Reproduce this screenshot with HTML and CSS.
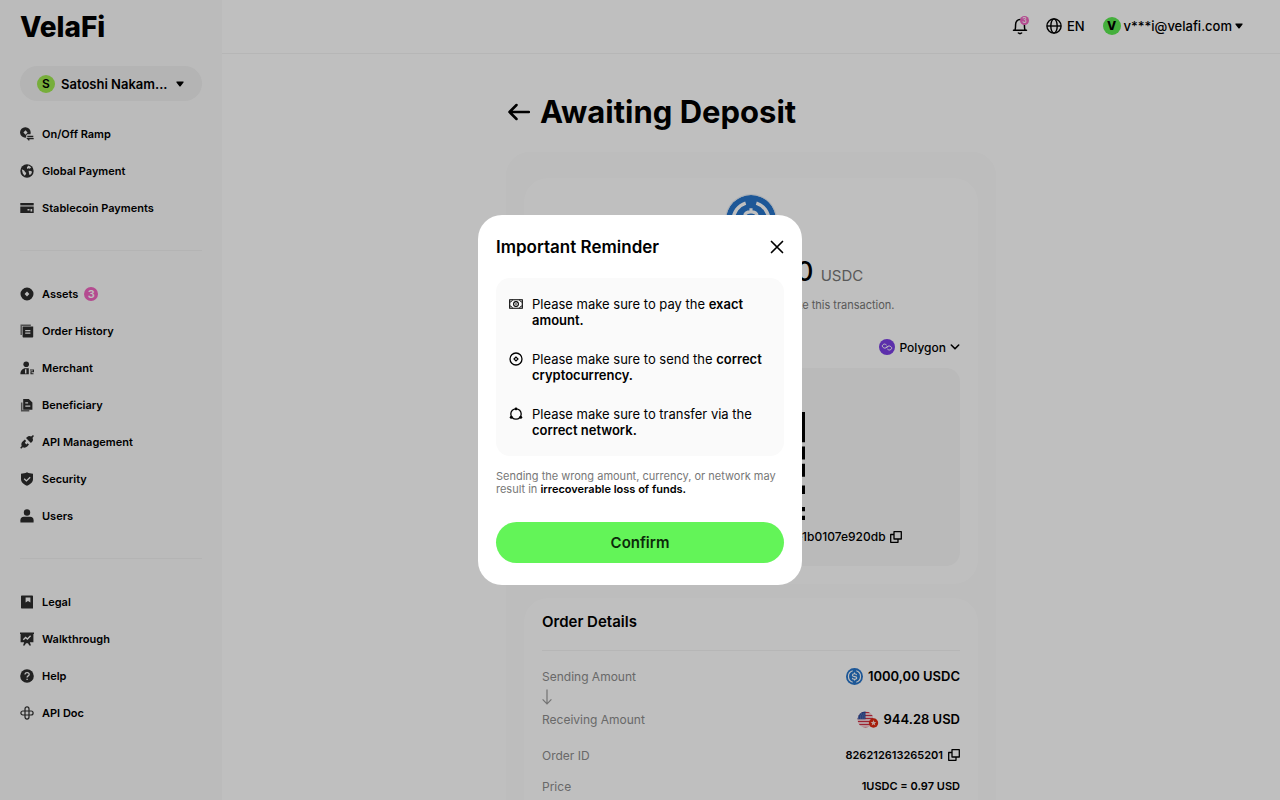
FILE: index.html
```html
<!DOCTYPE html>
<html lang="en">
  <head>
    <meta charset="UTF-8" />
    <meta name="viewport" content="width=device-width, initial-scale=1.0" />
    <title>VelaFi - Awaiting Deposit</title>
    <link rel="stylesheet" href="styles.css">
  </head>
  <body>
    <svg class="sprite" aria-hidden="true">
      <symbol id="usdc" viewBox="0 0 32 32">
        <circle cx="16" cy="16" r="16" fill="#2775ca" />
        <path d="M12.6 5.200a11.300 11.300 0 0 0 0 21.600M19.400 5.200a11.300 11.300 0 0 1 0 21.600" fill="none" stroke="#fff" stroke-width="2.200" />
        <path d="M20 13.400c-.3-1.700-1.800-2.600-4-2.600-2.400 0-4 1-4 2.700 0 4 8.200 1.500 8.200 5 0 1.700-1.700 2.800-4.200 2.800-2.400 0-4-1.100-4.200-2.800M16 8.400v2.600M16 21v2.600" fill="none" stroke="#fff" stroke-width="2" />
      </symbol>
      <symbol id="copy" viewBox="0 0 12 12">
        <path d="M4 .7h7.300V8H4zM4 3.500H.7v7.800H8V8" fill="none" stroke="currentColor" stroke-width="1.300" stroke-linejoin="round" />
      </symbol>
      <symbol id="caret" viewBox="0 0 8 6">
        <path d="M1 .5h6c.6 0 .8.5.5.9L4.600 5.200c-.3.4-.9.4-1.200 0L.5 1.400C.2 1 .4.5 1 .5z" fill="currentColor" />
      </symbol>
    </svg>

    <div class="app">
      <aside class="sidebar">
        <a class="logo" href="#">VelaFi</a>
        <button class="account" type="button" aria-haspopup="true">
          <span class="avatar avatar-lime">S</span>
          <span class="account-name">Satoshi Nakam...</span>
          <svg class="caret"><use href="#caret" /></svg>
        </button>
        <nav>
          <ul class="menu">
            <li><a href="#">
              <svg viewBox="0 0 14 14"><path fill-rule="evenodd" d="M5.500.3a5.200 5.200 0 0 1 5.200 5.200c0 .7-.1 1.300-.3 1.800H8c-1.200 0-1.800.6-1.800 1.700v1.600A5.200 5.200 0 1 1 5.500.3zm0 2.900L3.400 5.500l2.100 2.300 2.100-2.300z" /><path d="M7.300 9.500h6M13.700 11.700H7.700l1.600 1.700" fill="none" stroke="currentColor" stroke-width="1.300" /></svg>
              On/Off Ramp</a></li>
            <li><a href="#">
              <svg viewBox="0 0 14 14"><circle cx="7" cy="7" r="6.700" /><path class="cut" d="M8.500 1.600l2.700 1.600-1.400 1.600-1.300-.6-1.300.8-.3-1.700zM1.800 5.200l2.400 1.300.9 1.600 1.200.8-.6 1.600-1 1.300L2.800 9.600zM8.600 6.700l2.600.4.8.9-.9 2.300-1.700.7-.4-1.800z" /></svg>
              Global Payment</a></li>
            <li><a href="#">
              <svg viewBox="0 0 14 14"><path d="M.3 2h13.400v2.400H.3z" /><path fill-rule="evenodd" d="M.3 5.500h13.400V12H.3zm7.200 2.600v1.500h2V8.100zm3 0v2.300h1.700V8.100z" /></svg>
              Stablecoin Payments</a></li>
          </ul>
          <hr class="line">
          <ul class="menu">
            <li><a href="#">
              <svg viewBox="0 0 14 14"><path fill-rule="evenodd" d="M7 .5a6.500 6.500 0 1 1 0 13 6.500 6.500 0 0 1 0-13zm0 4L4.600 7 7 9.500 9.400 7z" /></svg>
              Assets <span class="badge">3</span></a></li>
            <li><a href="#">
              <svg viewBox="0 0 14 14"><path d="M1.200 11V1.200h9.600" fill="none" stroke="currentColor" stroke-width="1.400" opacity=".7" /><path fill-rule="evenodd" d="M2.600 2.500h10.600v10c0 .6-.4 1-1 1H3.600c-.6 0-1-.4-1-1zM5.200 6v1.200h5.200V6zm0 2.600v1.200h5.200V8.600z" /></svg>
              Order History</a></li>
            <li><a href="#">
              <svg viewBox="0 0 14 14"><circle cx="6.200" cy="3.300" r="2.800" /><path fill-rule="evenodd" d="M.4 13.300c0-3.600 2-6 5.200-6h3.200v6zM5 8.200v4.200h1.400V8.200z" /><path d="M10 9h3.500v1.800H11v2h2.500" fill="none" stroke="currentColor" stroke-width="1.100" /></svg>
              Merchant</a></li>
            <li><a href="#">
              <svg viewBox="0 0 14 14"><path d="M1.700 4.500v8.300h7.600" fill="none" stroke="currentColor" stroke-width="1.500" opacity=".7" /><path fill-rule="evenodd" d="M3.200 1h5.600l3.600 3.500v7.300H3.200zM5.300 4.300v1.200h2.800V4.300zm0 3.300v1.200h5V7.600z" /></svg>
              Beneficiary</a></li>
            <li><a href="#">
              <svg viewBox="0 0 14 14"><path d="M13.900.9L13 0l-1.800 1.500C9.800.6 8.200.9 7.200 1.900L6 3.100 10.900 8l1.200-1.200c1-1 1.200-2.600.4-3.900zM4.900 4.600l-2 1.600C1.300 7.600 1 9.300 1.700 11L.2 12.700l1 1L2.800 12.300c1.500.8 3.200.5 4.400-.7L9 9.500 7.600 8.200 6.400 9.400 4.800 7.800l1.300-1.900z" /></svg>
              API Management</a></li>
            <li><a href="#">
              <svg viewBox="0 0 14 14"><path d="M7 .3c2 1 3.800 1.400 6 1.500V7c0 3.200-2.500 5.400-6 6.700C3.500 12.400 1 10.200 1 7V1.800C3.200 1.700 5 1.300 7 .3z" /><path class="cut-line" d="M4.200 6.800l2.200 2.100 3.800-3.600" /></svg>
              Security</a></li>
            <li><a href="#">
              <svg viewBox="0 0 14 14"><circle cx="7" cy="3.500" r="3.200" /><path d="M.4 13.500v-2.300c0-2 1.300-3.400 3.400-3.400h6.400c2.100 0 3.400 1.400 3.400 3.400v2.300z" /></svg>
              Users</a></li>
          </ul>
          <hr class="line">
          <ul class="menu">
            <li><a href="#">
              <svg viewBox="0 0 14 14"><path fill-rule="evenodd" d="M1 1.500c0-.6.4-1 1-1h10c.6 0 1 .4 1 1v12H2c-.6 0-1-.4-1-1zm4.600.9v5.200l2.400-1.700 2.400 1.700V2.400z" /></svg>
              Legal</a></li>
            <li><a href="#">
              <svg viewBox="0 0 14 14"><path d="M0 .4h14V2h-.6v8.300H9.800l1.200 3.200H9.300L8 11.200H6l-1.300 2.300H3l1.200-3.200H.6V2H0z" /><path class="cut-line" d="M3.300 7.800l2.300-2.300 1.800 1.500 3.200-3.200" /></svg>
              Walkthrough</a></li>
            <li><a href="#">
              <svg viewBox="0 0 14 14"><circle cx="7" cy="7" r="6.800" /><path class="cut-line" d="M5 5.600c0-2.900 4.200-2.500 4.200-.2 0 1.500-2.100 1.500-2.100 3M7.100 9.700v1.300" /></svg>
              Help</a></li>
            <li><a href="#">
              <svg viewBox="0 0 14 14"><path d="M5 5V2.900a2 2 0 0 1 4 0V5M9 5h2.100a2 2 0 0 1 0 4H9M9 9v2.100a2 2 0 0 1-4 0V9M5 9H2.900a2 2 0 0 1 0-4H5M5 5h4v4H5z" fill="none" stroke="currentColor" stroke-width="1.200" /></svg>
              API Doc</a></li>
          </ul>
        </nav>
      </aside>

      <div class="content">
        <header class="topbar">
          <button class="top-btn bell" type="button" aria-label="Notifications">
            <svg viewBox="0 0 16 18"><path d="M1.500 13.300h13M3 13c.4-1 .6-2 .6-5.600C3.600 4.600 5.400 2.600 8 2.600s4.400 2 4.400 4.800c0 3.600.2 4.600.6 5.600M6.400 16c1 .8 2.200.8 3.200 0" fill="none" stroke="currentColor" stroke-width="1.500" stroke-linecap="round" /></svg>
            <span class="bell-count">3</span>
          </button>
          <button class="top-btn" type="button">
            <svg class="globe" viewBox="0 0 16 16"><g fill="none" stroke="currentColor" stroke-width="1.400"><circle cx="8" cy="8" r="7.100" /><ellipse cx="8" cy="8" rx="3.200" ry="7.100" /><path d="M1 8h14" /></g></svg>
            EN
          </button>
          <button class="top-btn user" type="button" aria-haspopup="true">
            <span class="avatar avatar-green">V</span>
            v***i@velafi.com
            <svg class="caret"><use href="#caret" /></svg>
          </button>
        </header>

        <main class="page">
          <div class="page-title">
            <a class="back" href="#" aria-label="Back">
              <svg viewBox="0 0 22 18"><path d="M21 9H1.500M8.500 2l-7 7 7 7" fill="none" stroke="currentColor" stroke-width="2.500" stroke-linecap="round" stroke-linejoin="round" /></svg>
            </a>
            <h1>Awaiting Deposit</h1>
          </div>

          <div class="panel">
            <section class="card deposit">
              <svg class="coin-lg"><use href="#usdc" /></svg>
              <p class="amount">1000,000000 <span>USDC</span></p>
              <p class="hint">Please send exact amount to complete this transaction.</p>
              <div class="network">
                <label for="network">Network</label>
                <span class="network-pick">
                  <svg class="polygon" viewBox="0 0 16 16"><circle cx="8" cy="8" r="8" fill="#7b3fe4" /><path d="M9.300 7.200L6.600 8.900a1.700 1.700 0 0 1-1.700 0l-.8-.5a1.600 1.600 0 0 1-.8-1.400c0-.6.300-1.100.8-1.400l.6-.3a1.700 1.700 0 0 1 1.700 0l1.200.8M6.700 8.800l2.700-1.600a1.700 1.700 0 0 1 1.700 0l.8.5c.5.3.8.8.8 1.400s-.3 1.100-.8 1.400l-.7.3a1.700 1.700 0 0 1-1.700 0l-1.100-.7" fill="none" stroke="#fff" /></svg>
                  <select id="network">
                    <option>Polygon</option>
                    <option>Ethereum</option>
                    <option>Tron</option>
                  </select>
                  <svg class="chevron" viewBox="0 0 10 10"><path d="M1.300 3L5 6.800 8.700 3" fill="none" stroke="currentColor" stroke-width="1.600" stroke-linecap="round" stroke-linejoin="round" /></svg>
                </span>
              </div>
              <div class="address-box">
                <svg class="qr" viewBox="0 0 25 25">
                  <path d="M0 .5h7M18 .5h7M0 6.500h7M18 6.500h7M.5 0v7M6.500 0v7M18.500 0v7M24.500 0v7M2 2.500h3M2 3.500h3M2 4.500h3M20 2.500h3M20 3.500h3M20 4.500h3M0 18.500h7M0 24.500h7M.5 18v7M6.500 18v7M2 20.500h3M2 21.500h3M2 22.500h3" />
                  <path d="M9 .5h2M13 1.500h3M10 2.500h4M8 3.500h1M12 4.500h4M9 5.500h2M8 6.500h1M10 6.500h1M12 6.500h1M14 6.500h1M16 6.500h1M1 8.500h3M6 8.500h5M13 8.500h2M18 8.500h3M0 10.500h2M5 10.500h3M11 10.500h6M20 10.500h2M2 12.500h5M9 12.500h3M15 12.500h4M0 14.500h4M7 14.500h2M12 14.500h5M19 14.500h3M3 16.500h2M8 16.500h8M18 16.500h3M9 18.500h2M13 18.500h6M8 20.500h3M15 20.500h6M10 22.500h4M16 22.500h3M21 22.500h1M9 24.500h5M17 24.500h4M24.500 8v3M24.500 12v3M24.500 17v2M24.500 22v1M24.500 24v1" />
                </svg>
                <p class="address">0x7a3f9c52d8e64b1f03ac95e7d2e1b0107e920db
                  <button class="icon-btn" type="button" aria-label="Copy address"><svg class="copy"><use href="#copy" /></svg></button>
                </p>
              </div>
            </section>

            <section class="card details">
              <h2>Order Details</h2>
              <dl>
                <div class="row">
                  <dt>Sending Amount</dt>
                  <dd class="big"><svg class="coin"><use href="#usdc" /></svg>1000,00 USDC</dd>
                </div>
                <div class="arrow-row">
                  <svg viewBox="0 0 10 16"><path d="M5 .5v14M.6 10.300L5 14.800l4.400-4.500" fill="none" stroke="currentColor" stroke-width="1.200" /></svg>
                </div>
                <div class="row receiving">
                  <dt>Receiving Amount</dt>
                  <dd class="big">
                    <svg class="flag" viewBox="0 0 22 17">
                      <clipPath id="round"><circle cx="8.500" cy="8.500" r="8" /></clipPath>
                      <g clip-path="url(#round)">
                        <path fill="#fff" d="M0 0h17v17H0z" />
                        <path d="M0 1.500h17M0 4.500h17M0 7.500h17M0 10.500h17M0 13.500h17M0 16.500h17" stroke="#d02f44" stroke-width="1.500" />
                        <path fill="#2b4a9b" d="M0 0h8.500v8.300H0z" />
                        <path d="M2 3h6M1 5h7M1 7h7" stroke="#fff" stroke-width=".6" stroke-dasharray=".7 1.200" />
                      </g>
                      <circle cx="16.500" cy="12" r="4.700" fill="#de2910" />
                      <path d="M16.500 9l.8 1.900 2.100.1-1.600 1.300.5 2.100-1.800-1.200-1.800 1.200.5-2.100-1.600-1.300 2.100-.1z" fill="#ffd9d0" />
                    </svg>944.28 USD</dd>
                </div>
                <div class="row gap-top">
                  <dt>Order ID</dt>
                  <dd>826212613265201 <button class="icon-btn" type="button" aria-label="Copy order ID"><svg class="copy"><use href="#copy" /></svg></button></dd>
                </div>
                <div class="row gap-top">
                  <dt>Price</dt>
                  <dd>1USDC = 0.97 USD</dd>
                </div>
              </dl>
            </section>
          </div>
        </main>
      </div>
    </div>

    <div class="overlay js-overlay">
      <div class="modal" role="dialog" aria-modal="true" aria-labelledby="modal-title">
        <div class="modal-head">
          <h2 id="modal-title">Important Reminder</h2>
          <button class="icon-btn js-close" type="button" aria-label="Close">
            <svg class="close" viewBox="0 0 14 14"><path d="M1.500 1.500l11 11M12.500 1.500l-11 11" stroke="currentColor" stroke-width="1.700" stroke-linecap="round" /></svg>
          </button>
        </div>
        <ul class="reminders">
          <li>
            <svg viewBox="0 0 14 14"><g fill="none" stroke="currentColor" stroke-width="1.100"><path d="M.7 2.700h12.600v8.600H.7z" /><path d="M3.300 2.700c0 1.400-1 2.300-2.600 2.300M10.700 2.700c0 1.400 1 2.300 2.600 2.300M3.300 11.300C3.300 9.900 2.300 9 .7 9M10.700 11.300c0-1.400 1-2.300 2.600-2.300" stroke-width=".9" /><circle cx="7" cy="7" r="2.400" /></g><circle cx="7" cy="7" r=".8" /></svg>
            <p>Please make sure to pay the <b>exact amount.</b></p>
          </li>
          <li>
            <svg viewBox="0 0 14 14"><circle cx="7" cy="7" r="6" fill="none" stroke="currentColor" stroke-width="1.300" /><path d="M7 5L5 7l2 2 2-2z" fill="none" stroke="currentColor" stroke-width="1.200" /></svg>
            <p>Please make sure to send the <b>correct cryptocurrency.</b></p>
          </li>
          <li>
            <svg viewBox="0 0 14 14"><circle cx="7" cy="7" r="5.200" fill="none" stroke="currentColor" stroke-width="1.300" /><circle cx="7" cy="1.900" r="1.400" /><circle cx="2.300" cy="10.300" r="1.500" /><circle cx="11.700" cy="10.300" r="1.500" /></svg>
            <p>Please make sure to transfer via the <b>correct network.</b></p>
          </li>
        </ul>
        <p class="warning">Sending the wrong amount, currency, or network may result in <b>irrecoverable loss of funds.</b></p>
        <button class="confirm js-close" type="button">Confirm</button>
      </div>
    </div>

    <script>
      document.querySelectorAll(".js-close").forEach((btn) => {
        btn.addEventListener("click", () => {
          document.querySelector(".js-overlay").style.display = "none";
          document.body.style.overflow = "auto";
        });
      });
    </script>
  </body>
</html>
```

FILE: styles.css
```css
* {
  box-sizing: border-box;
}
body {
  font-family: Inter, "Liberation Sans", sans-serif;
  font-size: 12px;
  color: #000;
  background-color: #fff;
  margin: 0;
  overflow: hidden;
}
h1,
h2,
p,
ul,
dl,
dd {
  margin: 0;
  padding: 0;
}
ul {
  list-style: none;
}
a {
  color: inherit;
  text-decoration: none;
}
button,
select {
  font: inherit;
  color: inherit;
  background: none;
  border: 0;
  padding: 0;
  cursor: pointer;
}
svg {
  display: block;
  flex: none;
}
.sprite {
  position: absolute;
  width: 0;
  height: 0;
}
.app {
  display: flex;
  min-height: 100vh;
}

/* sidebar */
.sidebar {
  flex: none;
  width: 222px;
  padding: 10px 20px;
  background-color: #fafafa;
}
.logo {
  display: block;
  font-size: 28px;
  line-height: 34px;
  font-weight: 800;
  margin-bottom: 22px;
}
.account {
  display: flex;
  align-items: center;
  gap: 6px;
  width: 100%;
  height: 35px;
  padding: 0 18px 0 17px;
  border-radius: 18px;
  background-color: #f0f0f0;
  font-size: 13px;
  font-weight: 600;
  margin-bottom: 14px;
}
.account-name {
  flex: 1;
  text-align: left;
  white-space: nowrap;
}
.avatar {
  display: flex;
  align-items: center;
  justify-content: center;
  width: 18px;
  height: 18px;
  border-radius: 50%;
  font-size: 12px;
  font-weight: 600;
}
.avatar-lime {
  background-color: #9fe84f;
}
.avatar-green {
  background-color: #5bea50;
  font-weight: 800;
}
.caret {
  width: 8px;
  height: 6px;
}
.menu a {
  display: flex;
  align-items: center;
  gap: 8px;
  height: 37px;
  font-size: 11px;
  font-weight: 600;
}
.menu svg {
  width: 14px;
  height: 14px;
  color: #2c2c2c;
  fill: #2c2c2c;
}
.menu .cut {
  fill: #fafafa;
}
.menu .cut-line {
  fill: none;
  stroke: #fafafa;
  stroke-width: 1.3;
}
.badge {
  width: 14px;
  height: 14px;
  margin-left: -2px;
  border-radius: 50%;
  background-color: #f065c0;
  color: #fff;
  line-height: 14px;
  text-align: center;
}
.line {
  height: 1px;
  border: 0;
  background-color: #f0f0f0;
  margin: 24px 0;
}

/* top bar */
.content {
  flex: 1;
  min-width: 0;
}
.topbar {
  display: flex;
  align-items: center;
  justify-content: flex-end;
  gap: 18px;
  height: 54px;
  padding: 0 37px 2px;
  border-bottom: 1px solid #f3f3f3;
}
.top-btn {
  display: flex;
  align-items: center;
  gap: 5px;
  font-size: 13px;
  font-weight: 500;
}
.bell {
  position: relative;
}
.bell svg {
  width: 16px;
  height: 18px;
}
.bell-count {
  position: absolute;
  top: -1px;
  right: -1px;
  width: 9px;
  height: 9px;
  border-radius: 50%;
  background-color: #f065c0;
  color: #fff;
  font-size: 7px;
  line-height: 9px;
}
.globe {
  width: 16px;
  height: 16px;
}
.user {
  gap: 3px;
}

/* deposit page */
.page {
  width: 100%;
  max-width: 490px;
  margin: 40px auto;
}
.page-title {
  display: flex;
  align-items: center;
  gap: 10px;
  padding-left: 2px;
  margin-bottom: 22px;
}
.page-title h1 {
  font-size: 31px;
  line-height: 36px;
  font-weight: 700;
}
.back svg {
  width: 22px;
  height: 18px;
}
.panel {
  display: flex;
  flex-direction: column;
  gap: 14px;
  padding: 26px 18px;
  border-radius: 24px;
  background-color: #fcfcfc;
}
.card {
  padding: 16px 18px 18px;
  border-radius: 24px;
  background-color: #fff;
}
.deposit {
  text-align: center;
}
.coin-lg {
  width: 52px;
  height: 52px;
  margin: 0 auto 8px;
  padding: 1px;
  border-radius: 50%;
  background-color: #e4eaf2;
}
.amount {
  font-size: 27px;
  line-height: 36px;
  font-weight: 500;
  margin-bottom: 8px;
}
.amount span {
  font-size: 15px;
  line-height: 20px;
  font-weight: 400;
  color: #777;
}
.hint {
  font-size: 11px;
  line-height: 14px;
  color: #777;
  margin-bottom: 24px;
}
.network {
  display: flex;
  align-items: center;
  justify-content: space-between;
  height: 22px;
  font-weight: 500;
  margin-bottom: 10px;
}
.network-pick {
  display: flex;
  align-items: center;
  gap: 4px;
}
.network select {
  appearance: none;
  field-sizing: content;
}
.polygon {
  width: 16px;
  height: 16px;
}
.chevron {
  width: 10px;
  height: 10px;
}
.address-box {
  padding: 44px 20px 20px;
  border-radius: 14px;
  background-color: #f9f9f9;
}
.qr {
  width: 108px;
  height: 108px;
  margin: 0 auto 8px;
  stroke: #000;
}
.address {
  display: flex;
  align-items: center;
  justify-content: center;
  gap: 4px;
  font-size: 12px;
  line-height: 18px;
  font-weight: 500;
}
.copy {
  width: 12px;
  height: 12px;
}
.details {
  padding-top: 14px;
}
.details h2 {
  font-size: 15px;
  line-height: 20px;
  font-weight: 600;
  padding-bottom: 18px;
  border-bottom: 1px solid #f3f3f3;
  margin-bottom: 13px;
}
.row {
  display: flex;
  align-items: center;
  justify-content: space-between;
  height: 24px;
}
.row dt {
  color: #8c8c8c;
}
.row dd {
  display: flex;
  align-items: center;
  gap: 5px;
  font-size: 11px;
  font-weight: 600;
}
.row .big {
  font-size: 13px;
}
.coin {
  width: 17px;
  height: 17px;
}
.flag {
  width: 22px;
  height: 17px;
}
.arrow-row {
  height: 19px;
  padding-top: 1px;
  color: #999;
}
.arrow-row svg {
  width: 10px;
  height: 16px;
}
.receiving {
  margin-bottom: 12px;
}
.gap-top {
  margin-bottom: 7px;
}

/* reminder popup */
.overlay {
  position: fixed;
  inset: 0;
  display: flex;
  align-items: center;
  justify-content: center;
  background-color: rgba(0, 0, 0, 0.25);
}
.modal {
  width: 324px;
  padding: 20px 18px 22px;
  border-radius: 24px;
  background-color: #fff;
}
.modal-head {
  display: flex;
  align-items: center;
  justify-content: space-between;
  margin-bottom: 19px;
}
.modal-head h2 {
  font-size: 17px;
  line-height: 24px;
  font-weight: 600;
}
.close {
  width: 14px;
  height: 14px;
}
.reminders {
  display: flex;
  flex-direction: column;
  gap: 23px;
  padding: 18px 13px;
  border-radius: 14px;
  background-color: #fafafa;
  margin-bottom: 14px;
}
.reminders li {
  display: flex;
  gap: 9px;
  font-size: 13px;
  line-height: 16px;
}
.reminders svg {
  width: 14px;
  height: 14px;
  margin-top: 1px;
}
b {
  font-weight: 600;
}
.warning {
  font-size: 11px;
  line-height: 13px;
  color: #777;
  margin-bottom: 26px;
}
.warning b {
  color: #000;
}
.confirm {
  width: 100%;
  height: 41px;
  border-radius: 21px;
  background-color: #63f458;
  color: #0c2b0a;
  font-size: 15px;
  font-weight: 600;
}
```
